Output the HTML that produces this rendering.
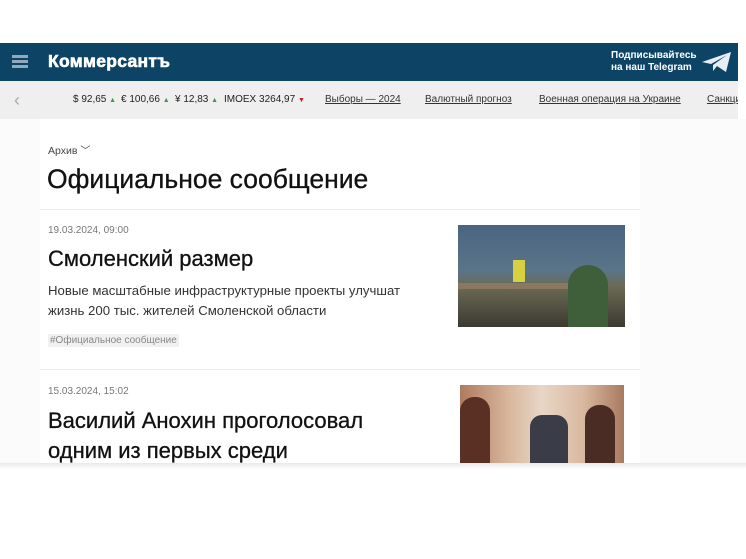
<!DOCTYPE html>
<html><head><meta charset="utf-8"><style>
*{margin:0;padding:0;box-sizing:border-box}
body{width:746px;height:559px;background:#fff;font-family:"Liberation Sans","DejaVu Sans",sans-serif;position:relative;overflow:hidden;color:#111}
.hdr{position:absolute;left:0;top:43px;width:738px;height:38px;background:#0d4466}
.burger{position:absolute;left:12px;top:12px;width:16px}
.burger i{display:block;height:3px;background:#8fa9bd;margin-bottom:2px}
.logo{position:absolute;left:48px;top:8px;color:#fff;font-weight:bold;font-size:17.5px;letter-spacing:0.3px;-webkit-text-stroke:0.6px #fff}
.tg{position:absolute;left:611px;top:7px;color:#fff;font-size:10px;line-height:12px;font-weight:bold}
.plane{position:absolute;left:701px;top:8px}
.nav{position:absolute;left:0;top:81px;width:738px;height:38px;background:#efefef;font-size:10px;color:#222;white-space:nowrap;overflow:hidden}
.nav span{position:absolute;top:13px}
.nav u{text-decoration:underline;color:#333}
.up{color:#3a9a55;font-size:7px}.dn{color:#c0202a;font-size:7px}
.chev{position:absolute;left:14px;top:9px;color:#aaa;font-size:18px}
.main{position:absolute;left:0;top:119px;width:746px;height:348px;background:#fbfbfb}
.card{position:absolute;left:40px;top:0;width:600px;height:348px;background:#fff}
.t{position:absolute;white-space:nowrap}
.h{font-weight:500;-webkit-text-stroke:0.3px #111}
.line{position:absolute;left:40px;width:600px;height:1px;background:#ececec}
.shadow{position:absolute;left:0;top:463px;width:746px;height:6px;background:linear-gradient(#e8e8e8,#fff)}
</style></head><body>
<div class="hdr">
 <div class="burger"><i></i><i></i><i></i></div>
 <div class="logo">Коммерсантъ</div>
 <div class="tg">Подписывайтесь<br>на наш Telegram</div>
 <svg class="plane" width="32" height="22" viewBox="0 0 32 22"><path d="M1 11 L30 1 L25 21 L16 15 L12 20 L12 14 L26 4 L10 13 Z" fill="#e6eef4"/></svg>
</div>
<div class="nav">
 <div class="chev">‹</div>
 <span style="left:73px">$ 92,65 <b class="up">▲</b></span>
 <span style="left:121px">€ 100,66 <b class="up">▲</b></span>
 <span style="left:175px">¥ 12,83 <b class="up">▲</b></span>
 <span style="left:224px">IMOEX 3264,97 <b class="dn">▼</b></span>
 <span style="left:325px"><u>Выборы — 2024</u></span>
 <span style="left:425px"><u>Валютный прогноз</u></span>
 <span style="left:539px"><u>Военная операция на Украине</u></span>
 <span style="left:707px"><u>Санкции</u></span>
</div>
<div class="main"><div class="card"></div></div>
<div class="t" style="left:48px;top:142px;font-size:10.5px;color:#444">Архив <span style="font-size:10px">﹀</span></div>
<div class="t h" style="left:47px;top:164px;font-size:26.5px;color:#111">Официальное сообщение</div>
<div class="line" style="top:209px"></div>
<div class="t" style="left:48px;top:225px;font-size:10px;color:#777">19.03.2024, 09:00</div>
<div class="t h" style="left:48px;top:246px;font-size:22px;color:#111">Смоленский размер</div>
<div class="t" style="left:48px;top:281px;font-size:13.2px;line-height:20px;color:#333">Новые масштабные инфраструктурные проекты улучшат<br>жизнь 200 тыс. жителей Смоленской области</div>
<div class="t" style="left:48px;top:334px;font-size:10px;color:#888;background:#f0f0f0;padding:1px 2px">#Официальное сообщение</div>
<div style="position:absolute;left:458px;top:225px;width:167px;height:102px;background:linear-gradient(#4a6580 0%,#5a7488 45%,#6b6a55 60%,#3c3a30 100%)">
 <div style="position:absolute;left:110px;top:40px;width:40px;height:62px;background:#3f5e3a;border-radius:20px 20px 0 0"></div>
 <div style="position:absolute;left:0;top:58px;width:110px;height:6px;background:#8a7860"></div>
 <div style="position:absolute;left:55px;top:35px;width:12px;height:22px;background:#d7d040"></div>
</div>
<div class="line" style="top:369px"></div>
<div class="t" style="left:48px;top:386px;font-size:10px;color:#777">15.03.2024, 15:02</div>
<div class="t h" style="left:48px;top:406px;font-size:22px;line-height:30px;color:#111">Василий Анохин проголосовал<br>одним из первых среди</div>
<div style="position:absolute;left:460px;top:385px;width:164px;height:82px;background:linear-gradient(90deg,#b07a60 0%,#d8b79c 30%,#e8d6c6 50%,#d9b9a0 75%,#a87a60 100%)">
 <div style="position:absolute;left:0;top:12px;width:30px;height:70px;background:#5a3025;border-radius:14px 14px 0 0"></div>
 <div style="position:absolute;left:70px;top:30px;width:38px;height:52px;background:#3a3c48;border-radius:12px 12px 0 0"></div>
 <div style="position:absolute;left:125px;top:20px;width:30px;height:62px;background:#4a2c25;border-radius:14px 14px 0 0"></div>
</div>
<div class="shadow"></div>
</body></html>
